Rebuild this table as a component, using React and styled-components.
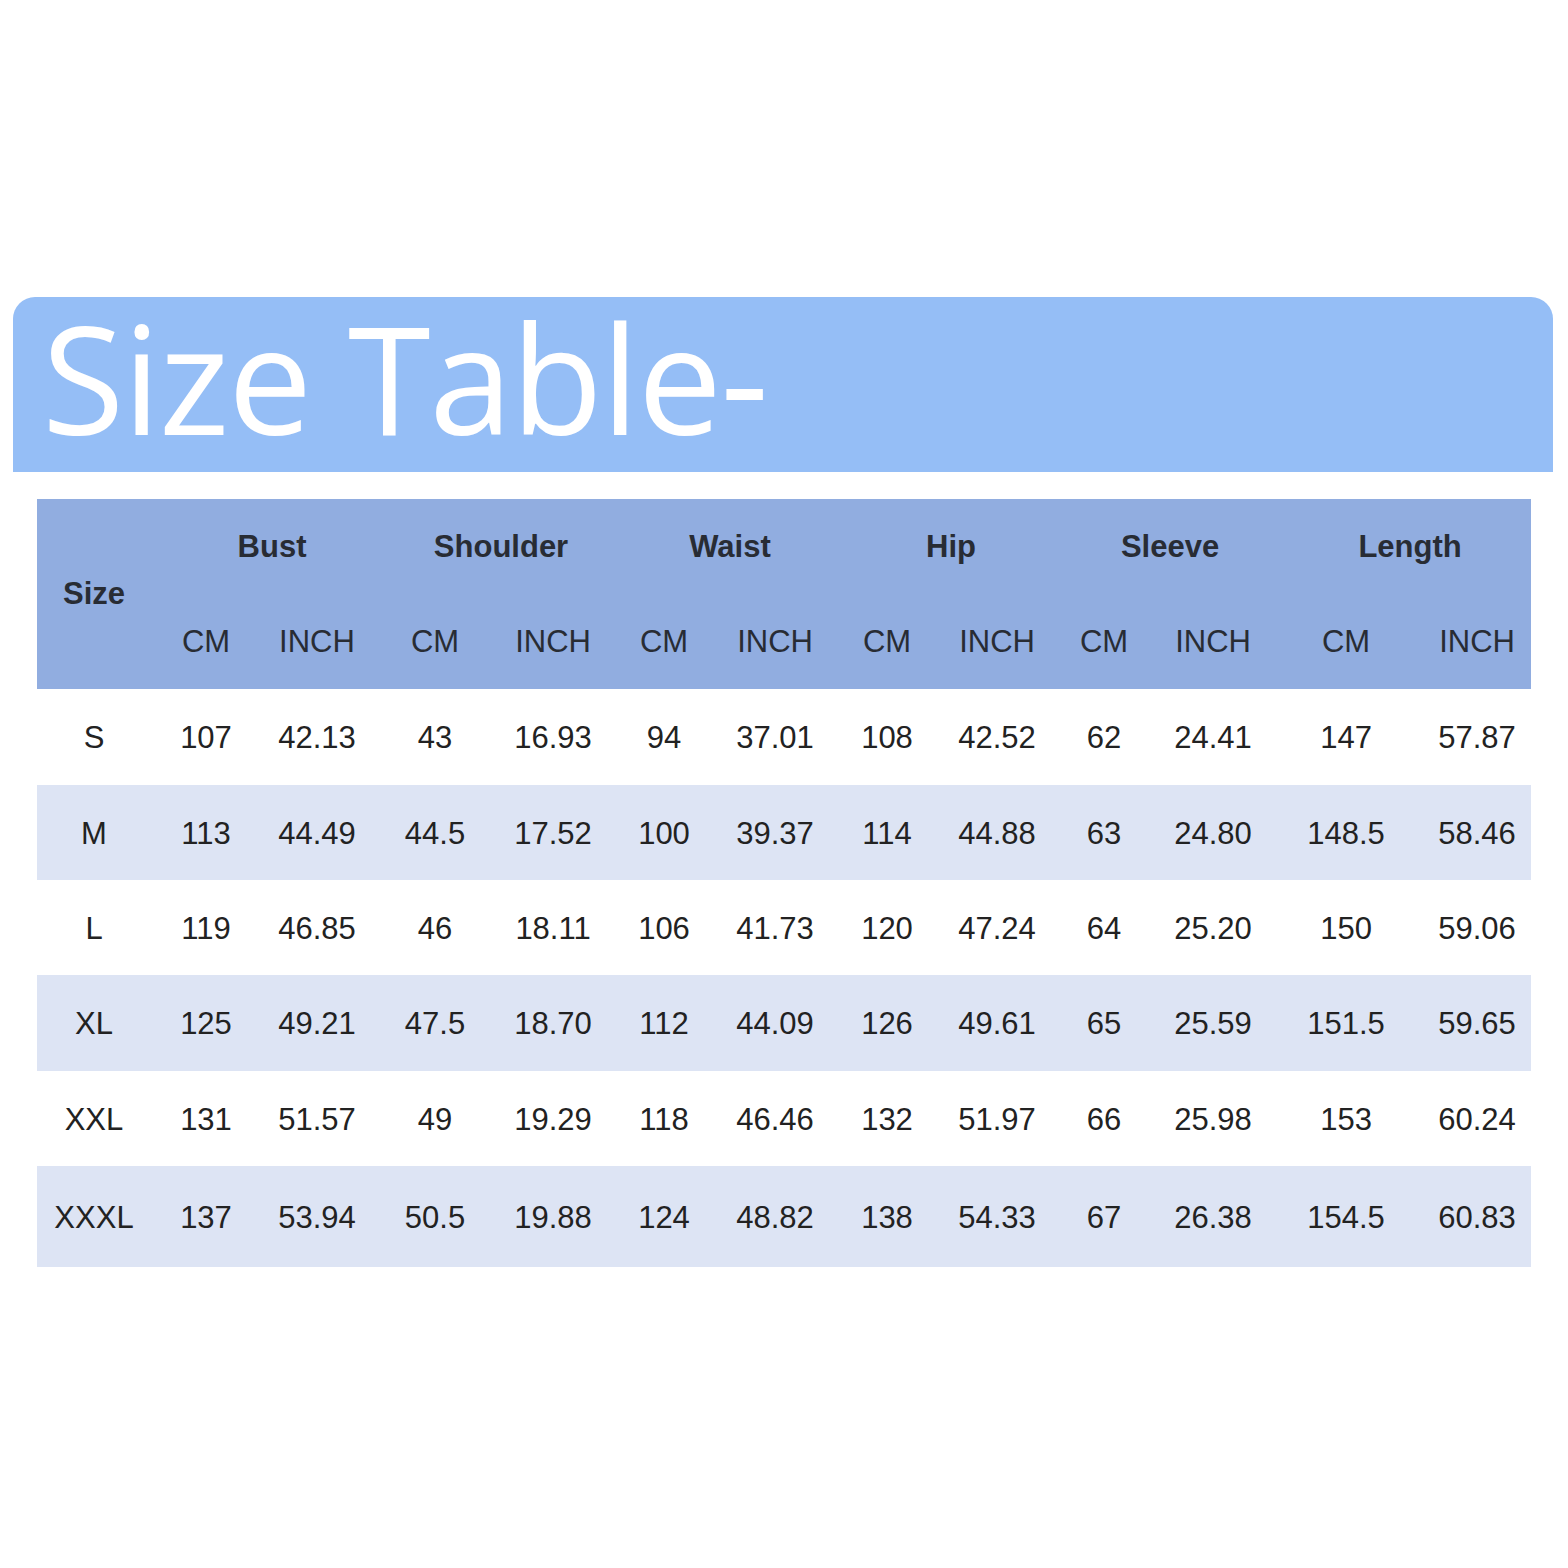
import React from "react";
import styled, { createGlobalStyle } from "styled-components";

const Global = createGlobalStyle`
  html, body { margin: 0; padding: 0; background: #ffffff; }
  body { width: 1568px; height: 1568px; overflow: hidden; }
`;

const Page = styled.div`
  width: 1568px;
  height: 1568px;
  padding-top: 297px;
  box-sizing: border-box;
  display: flex;
  flex-direction: column;
`;

const Banner = styled.div`
  margin-left: 13px;
  width: 1540px;
  height: 175px;
  background: #95bef6;
  border-radius: 22px 22px 0 0;
  display: flex;
  align-items: center;
  box-sizing: border-box;
  padding-left: 29px;
`;

const Title = styled.h1`
  margin: 0;
  font-family: "Open Sans", "Noto Sans", sans-serif;
  font-weight: 400;
  font-size: 150px;
  letter-spacing: -1.5px;
  line-height: 1.2;
  color: #ffffff;
  transform: translateY(-8px);
  white-space: nowrap;
`;

const Table = styled.table`
  margin: 27px 0 0 37px;
  width: 1494px;
  border-collapse: collapse;
  table-layout: fixed;
  font-family: "Liberation Sans", Arial, sans-serif;
  color: #222222;
`;

const HeadRow = styled.tr`
  background: #91ade0;
  height: 95px;
`;

const HeadCell = styled.th`
  padding: 0 0 0 ${(p) => (p.$shift ? "20px" : "0")};
  font-size: 31px;
  font-weight: ${(p) => (p.$bold ? 700 : 400)};
  color: #282c34;
  text-align: center;
  vertical-align: middle;
  white-space: nowrap;
`;

const BodyRow = styled.tr`
  background: ${(p) => (p.$alt ? "#dde4f4" : "#ffffff")};
  height: ${(p) => p.$h}px;
`;

const Cell = styled.td`
  padding: 2px 0 0 0;
  font-size: 31px;
  text-align: center;
  vertical-align: middle;
  white-space: nowrap;
`;

const widths = [114, 110, 112, 124, 112, 110, 112, 112, 108, 106, 112, 154, 108];
const groups = ["Bust", "Shoulder", "Waist", "Hip", "Sleeve", "Length"];
const rows = [
  ["S", "107", "42.13", "43", "16.93", "94", "37.01", "108", "42.52", "62", "24.41", "147", "57.87"],
  ["M", "113", "44.49", "44.5", "17.52", "100", "39.37", "114", "44.88", "63", "24.80", "148.5", "58.46"],
  ["L", "119", "46.85", "46", "18.11", "106", "41.73", "120", "47.24", "64", "25.20", "150", "59.06"],
  ["XL", "125", "49.21", "47.5", "18.70", "112", "44.09", "126", "49.61", "65", "25.59", "151.5", "59.65"],
  ["XXL", "131", "51.57", "49", "19.29", "118", "46.46", "132", "51.97", "66", "25.98", "153", "60.24"],
  ["XXXL", "137", "53.94", "50.5", "19.88", "124", "48.82", "138", "54.33", "67", "26.38", "154.5", "60.83"],
];
const heights = [96, 95, 95, 96, 95, 101];

export default function App() {
  return (
    <Page>
      <Global />
      <Banner>
        <Title>Size Table-</Title>
      </Banner>
      <Table>
        <colgroup>
          {widths.map((w, i) => (
            <col key={i} style={{ width: w }} />
          ))}
        </colgroup>
        <thead>
          <HeadRow>
            <HeadCell $bold rowSpan={2}>Size</HeadCell>
            {groups.map((g) => (
              <HeadCell key={g} $bold $shift colSpan={2}>
                {g}
              </HeadCell>
            ))}
          </HeadRow>
          <HeadRow>
            {groups.map((g) => (
              <React.Fragment key={g}>
                <HeadCell>CM</HeadCell>
                <HeadCell>INCH</HeadCell>
              </React.Fragment>
            ))}
          </HeadRow>
        </thead>
        <tbody>
          {rows.map((r, i) => (
            <BodyRow key={r[0]} $alt={i % 2 === 1} $h={heights[i]}>
              {r.map((v, j) => (
                <Cell key={j}>{v}</Cell>
              ))}
            </BodyRow>
          ))}
        </tbody>
      </Table>
    </Page>
  );
}
